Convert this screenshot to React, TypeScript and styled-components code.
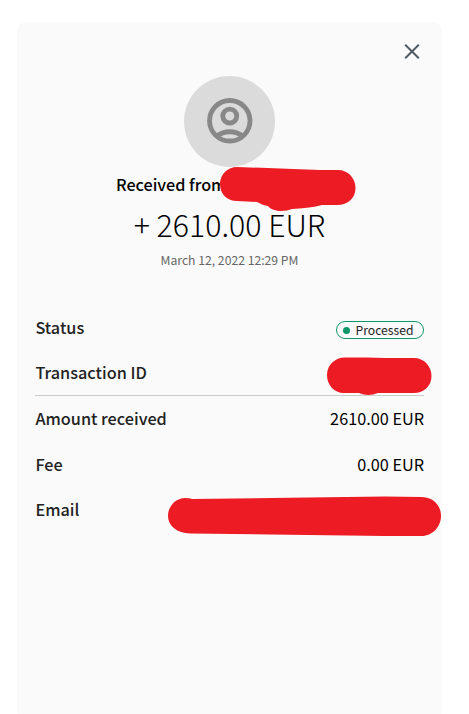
import React from 'react';
import styled, { createGlobalStyle } from 'styled-components';

const GlobalStyle = createGlobalStyle`
  * { box-sizing: border-box; }
  body {
    margin: 0;
    background: #fff;
    color: #000;
    font-family: "Noto Sans CJK SC", "Noto Sans", sans-serif;
  }
`;

const Page = styled.main`
  width: 469px;
  height: 714px;
  padding: 22px 27px 0 17px;
  overflow: hidden;
`;

const Card = styled.section`
  position: relative;
  display: flex;
  flex-direction: column;
  height: 692px;
  padding: 0 18px;
  border-radius: 9px 9px 2px 2px;
  background: #fafafa;
`;

const Toolbar = styled.header`
  display: flex;
  justify-content: flex-end;
  height: 54px;
  padding-top: 20px;
`;

const CloseButton = styled.button`
  width: 24px;
  height: 18px;
  padding: 0;
  border: 0;
  background: none;
  svg { display: block; margin: 0 auto; }
`;

const Summary = styled.div`
  display: flex;
  flex-direction: column;
  align-items: center;
  height: 228px;
`;

const Avatar = styled.div`
  display: flex;
  justify-content: center;
  width: 91px;
  height: 91px;
  padding-top: 18px;
  border-radius: 50%;
  background: #dbdbdb;
`;

const Sender = styled.div`
  align-self: flex-start;
  margin-left: 81px;
  height: 34px;
  font-size: 16.2px;
  font-weight: 500;
  line-height: 34px;
  white-space: nowrap;
`;

const Amount = styled.div`
  height: 46px;
  font-size: 30.3px;
  font-weight: 300;
  line-height: 46px;
  white-space: nowrap;
`;

const DateText = styled.time`
  height: 26px;
  color: #666;
  font-size: 12.2px;
  line-height: 26px;
`;

const Details = styled.dl`
  margin: 0;
`;

const Row = styled.div<{ $height: number; $divided?: boolean; $raised?: boolean }>`
  display: flex;
  align-items: center;
  justify-content: space-between;
  height: ${({ $height }) => $height}px;
  padding-bottom: ${({ $raised }) => ($raised ? 2 : 0)}px;
  border-bottom: ${({ $divided }) => ($divided ? '1px solid #ccc' : '0')};
`;

const Label = styled.dt`
  padding-left: 0.4px;
  color: #222;
  font-size: 16.25px;
  font-weight: 500;
  line-height: 24px;
`;

const Value = styled.dd`
  margin: 0;
  font-size: 16.25px;
  line-height: 24px;
`;

const Status = styled.span`
  display: flex;
  align-items: center;
  gap: 5.5px;
  width: 88px;
  height: 18px;
  margin-top: 6px;
  padding-left: 6px;
  border: 1px solid #0e9768;
  border-radius: 9px;
  color: #222;
  font-size: 12.2px;
  line-height: 16px;
  &::before {
    content: '';
    width: 7px;
    height: 7px;
    border-radius: 50%;
    background: #0e9768;
  }
`;

const Redactions = styled.svg`
  position: absolute;
  top: 0;
  left: 0;
  pointer-events: none;
`;

export default function App() {
  return (
    <>
      <GlobalStyle />
      <Page>
        <Card>
          <Toolbar>
            <CloseButton aria-label="Close">
              <svg width="18" height="18" viewBox="0 0 18 18">
                <path d="M2.2 2.7l13.6 13.6M15.8 2.7L2.2 16.3" stroke="#525a62" strokeWidth="2" />
              </svg>
            </CloseButton>
          </Toolbar>
          <Summary>
            <Avatar>
              <svg width="54" height="54" viewBox="0 0 24 24" fill="none" stroke="#888" strokeWidth="2.15">
                <circle cx="11.9" cy="11.9" r="9" />
                <circle cx="11.9" cy="9.8" r="3.1" />
                <path d="M5.7 18.9Q11.9 14.7 18.1 18.9" />
              </svg>
            </Avatar>
            <Sender>Received from</Sender>
            <Amount>+ 2610.00 EUR</Amount>
            <DateText>March 12, 2022 12:29 PM</DateText>
          </Summary>
          <Details>
            <Row $height={46}>
              <Label>Status</Label>
              <Value><Status>Processed</Status></Value>
            </Row>
            <Row $height={46} $divided $raised>
              <Label>Transaction ID</Label>
            </Row>
            <Row $height={45} $raised>
              <Label>Amount received</Label>
              <Value>2610.00 EUR</Value>
            </Row>
            <Row $height={46}>
              <Label>Fee</Label>
              <Value>0.00 EUR</Value>
            </Row>
            <Row $height={44}>
              <Label>Email</Label>
            </Row>
          </Details>
          <Redactions width="425" height="540" viewBox="17 22 425 540" fill="#ed1c24" aria-hidden="true">
            <path d="M237 167L320 170H338C348 170 355.5 178 355.5 188S348 205 337 205H322C312 208 302 208 292 209C285 212 272 212 268 206Q262 205 257 202L237 201C227 201 220 194 220 184S228 167 237 167Z" />
            <path d="M345 357.500H367L385 358H414C424 358 431.500 366 431.500 376S424 393 414 393H378Q368 397 359 393H344C334 393 327 385 327 375S335 357.500 345 357.500Z" />
            <path d="M185 498Q190 498 192 499L270 498L385 496.500L421 497C433 497 441 505 441 516S432 536 422 536H385L270 534.500L190 533.500C177 533 168 526 168 516S176 498 185 498Z" />
          </Redactions>
        </Card>
      </Page>
    </>
  );
}
